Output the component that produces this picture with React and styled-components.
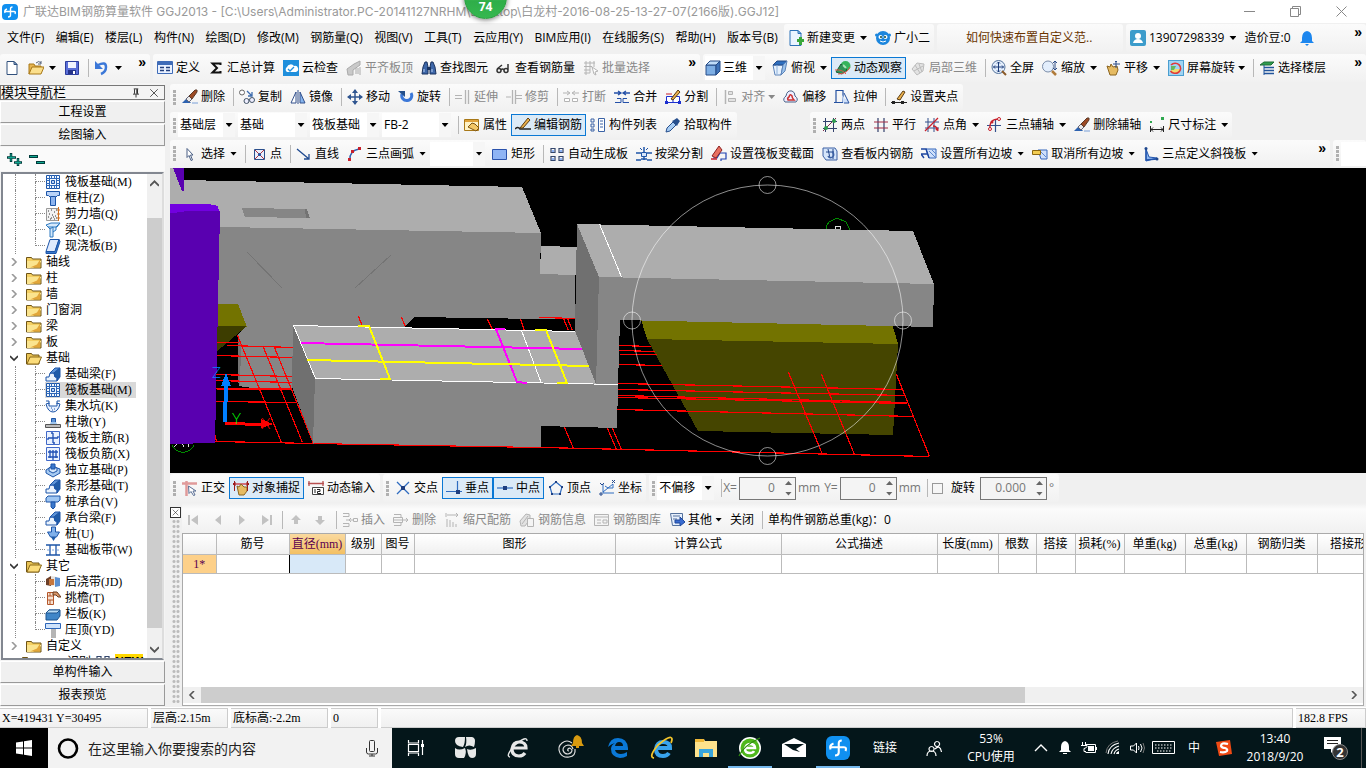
import React from "react";
import styled, { createGlobalStyle, css } from "styled-components";

const Global = createGlobalStyle`
  *, *::before, *::after { box-sizing: border-box; }
  html, body, #root { height: 100%; margin: 0; }
  body { background: #f0f0f0; overflow: hidden; }
  body, button, input, select { font: 12px/16px "Open Sans", "Noto Sans CJK SC", sans-serif; color: #000; }
  button { background: none; border: 0; padding: 0; margin: 0; white-space: nowrap; }
  svg { display: block; flex: none; }
`;

const simsun = css`font-family: "Liberation Serif", "Noto Sans CJK SC", serif;`;

/* ---------- icons ---------- */
const S = (d, c = "#2b4f8c", w = 1) => <path d={d} fill="none" stroke={c} strokeWidth={w} />;
const F = (d, c, s) => <path d={d} fill={c} stroke={s || "none"} />;
const B = "#1c55a8", G = "#b4b4b4", R = "#c8202c", K = "#222";

const raft = <>{F("M1.500 1.500h13v13h-13z", "#f2f8ff", B)}{S("M4.500 1v14M11.500 1v14M1 4.500h14M1 11.500h14M6.500 1v4M9.500 1v4M6.500 11v4M9.500 11v4M1 6.500h4M1 9.500h4M11 6.500h4M11 9.500h4", "#2f68b8")}{F("M6.500 6.500h3v3h-3z", "#b9d3f8", B)}</>;
const brush = <>{F("M0 14l5-5 4 5z", "#2d62b0")}{F("M4 10l3-3 3 3-3 3z", "#e8e8e8", "#667")}{F("M7 7l6-6h2v2l-5 7z", "#9c4a24", "#5b3a2a")}{S("M10 14h6", "#7aa0d8")}</>;
const beam3d = <>{F("M1 15v-4h3l1-4h4l1 4h2v4z", "#eaf3fd", B)}{F("M5 7l5-5h5L9 7z", "#5c93d6", B)}{F("M9 7l6-5v9l-3 4v-4h-2z", "#1f5ca8", B)}</>;
const bars = (c) => <>{F("M1.500 1.500h13v13h-13z", "#eaf2ff", "#4169c8")}{c}</>;

const ICONS = {
  logo: <><rect width="16" height="16" rx="4" fill="#1090f0" />{S("M8.500 11V5q0-2 2-2M3 7.500h9q2 0 1 2.500M5 5q-3 1-2 4M8.500 9v2q0 2-2.500 2", "#fff", 1.400)}</>,
  new: <>{F("M3 1.500h7l3 3v10H3z", "#fff", "#31507c")}{F("M10 1.500v3h3z", "#9db9dc", "#31507c")}</>,
  open: <>{F("M1 14V4h5l1 2h6v3H5z", "#e6b450", "#a87818")}{F("M1 14l3-7h12l-3 7z", "#fbdf8c", "#a87818")}{S("M8 3q3-3 5 0M13 1v3h-3", "#55637a")}</>,
  save: <>{F("M1.500 1.500h13v13h-13z", "#5b6fd8", "#2c3d9c")}{F("M4 2h8v6H4z", "#f2f5ff")}{F("M4 10h8v4H4z", "#26348a")}{F("M9 11h2v3H9z", "#fff")}</>,
  undo: <>{S("M4 5q8-4 8 2 0 5-5 7", "#3c78d8", 2.500)}{F("M1 1v8h8z", "#3c78d8")}</>,
  define: <>{F("M.500 1.500h15v12H.500z", "#e9f1ff", "#3f6cb8")}{F("M1 2h14v3H1z", "#3f6cb8")}{S("M3 7.500h4M3 10.500h4M9 7.500h4M9 10.500h4", "#223f7c", 1.500)}</>,
  sigma: <>{S("M12.500 5V3.500H4.500L9 8l-4.500 4.500h8V11", "#111", 2)}</>,
  cloud: <><rect width="16" height="16" fill="#1f8fdc" />{F("M4 12a3 3 0 0 1 0-5 4 4 0 0 1 7-1 3 3 0 0 1 2 6z", "#fff")}{S("M5 9l2 2 4-4", "#1f8fdc", 1.300)}</>,
  alignTop: <>{F("M1 9l7-5 6-3v4l-7 5v5H2z", "#c9c9c9", "#aaa")}{S("M10 8v6M12 8v6M14 7v8", "#aaa")}</>,
  binoc: <>{F("M2 7l2-5h2l1 5v7H1z", "#3d66a8", "#1a335f")}{F("M9 7l1-5h2l2 5 1 7H9z", "#3d66a8", "#1a335f")}{F("M6 7h4v3H6z", "#1a335f")}{S("M3 9v3M11 9v3", "#bcd3f6")}</>,
  glasses: <>{S("M1 10.500a2 2 0 1 0 4 0a2 2 0 1 0-4 0M8 10.500a2 2 0 1 0 4 0a2 2 0 1 0-4 0M5 10q1.500-2 3 0M1 9l5-4M12 10V4", "#333", 1.500)}</>,
  batch: <>{S("M1 3h11M1 6.500h8M1 10h6M1 13h6M3 1v14M7 1v12M11 1v6", G)}{F("M9 7l6 4-3 1 1 3-2-1z", "#fff", G)}</>,
  cube: <>{F("M1 5h10v10H1z", "#7daee4", "#244a86")}{F("M1 5l4-4h10l-4 4z", "#bfdcf8", "#244a86")}{F("M11 5l4-4v10l-4 4z", "#3d72b8", "#244a86")}</>,
  cubeTop: <>{F("M1 5h10l-2 10H3z", "#e6f1fd", "#5c83b8")}{F("M1 5l4-4h10l-4 4z", "#2f6fbf", "#244a86")}{F("M11 5l4-4-2 10-4 4z", "#9cc3ec", "#5c83b8")}{S("M5 5v9", "#8db1dc")}</>,
  orbit: <><circle cx="10.500" cy="6" r="5" fill="#35b35b" />{F("M1 12l5-8 6 6-5 4z", "#2f9357", "#1d5e38")}{S("M0 10q7-1 11 4M3 14q9 0 12-7", "#d8584a")}{S("M8 5l3 3", "#a8e6b8", 2)}</>,
  part3d: <><path d="M2 9l5-6 7 1-1 7-6 4z" fill="#e3e3e3" stroke="#bbb" />{S("M5 5l5 8M9 4l3 8M4 11l9-5", "#bbb")}</>,
  fit: <><circle cx="7.500" cy="7" r="6.500" fill="#e3eefc" stroke="#56749c" />{S("M11 11l4 4", "#8a5a28", 2)}{S("M7.500 2v10M2.500 7h10M6 3.500l1.500-1.500L9 3.500M6 10.500l1.500 1.500L9 10.500M4 5.500L2.500 7 4 8.500M11 5.500L12.500 7 11 8.500", "#1a3a78")}</>,
  zoom: <><circle cx="6" cy="6.500" r="5.500" fill="#e3eefc" stroke="#7c8da8" />{S("M10 11l4 4", "#b07a3a", 2.500)}{S("M13 1v9M11 3l2-2 2 2M11 8l2 2 2-2", "#2c4d88")}</>,
  pan: <>{F("M2 6l3 1 1-3 2 3 4-1 1 4-2 5H5z", "#e6bb62", "#8a6420")}{S("M11 1v7M8 4h7M10 2l1-1 1 1", "#2c4d88")}</>,
  rotScreen: <><rect x="0.500" y="0.500" width="15" height="15" fill="#9fd4f4" stroke="#4a9ed0" />{F("M3 9h9v4H3z", "#f0dc70")}{S("M3 5a5.500 5 0 1 1-.5 6", "#e03a3a", 1.600)}{F("M3 6h5l-2 4H3z", "#65b75c")}</>,
  layers: <>{F("M1 5l4-3h10l-3 3z", "#2f9c4f", "#1e6e36")}{S("M5 7.500h10M5 10.500h10M5 13.500h10", "#22559c", 1.600)}{S("M5 5v10", "#22559c")}</>,
  brush,
  copy: <><circle cx="3" cy="3.500" r="2.500" fill="#fff" stroke="#666" /><circle cx="7.500" cy="12" r="2.500" fill="#eef" stroke="#456" /><circle cx="13" cy="11" r="2.500" fill="#eef" stroke="#456" />{S("M8 2l5 5M13 3v4H9", "#3d6cae", 1.300)}</>,
  mirror: <>{F("M1 14l5-11v11z", "#fff", "#33508c")}{F("M10 3l5 11h-5z", "#86b5ee", "#33508c")}{S("M8 1v14", "#33508c")}</>,
  move: <>{S("M8 1v14M1 8h14", "#2f5590", 1.500)}{F("M8 0l3 4H5zM8 16l3-4H5zM0 8l4-3v6zM16 8l-4-3v6z", "#2f5590")}</>,
  rotate: <>{S("M4 5a5 5 0 1 0 9-1", "#3c78d8", 3)}{F("M0 2h7v6z", "#24508c")}</>,
  extend: <>{S("M0 6.500h7M0 9.500h7", G)}{S("M10.500 1v14M13.500 1v14", G, 1.300)}</>,
  trim: <>{S("M0 8h5M10 6.500h6M10 9.500h6", G)}{S("M6.500 1v14M9.500 1v14", G, 1.300)}</>,
  break: <>{S("M0 4h6M4 2l3 2-3 2M10 4h6M12 2L9 4l3 2", G)}{F("M1.500 9.500h5v3h-5zM9.500 9.500h5v3h-5z", "#fff", G)}</>,
  merge: <>{S("M0 4h6M4 2l3 2-3 2M10 4h6M12 2L9 4l3 2", "#2450a8", 1.300)}{S("M3 9.500h4v4H1M13 9.500H9v4h6", "#2450a8")}</>,
  split: <>{F("M1.500 7.500h13v6h-13z", "#fff", "#1c2fd0")}{S("M8 7v7", "#1c2fd0")}{S("M1 5h6", R)}{F("M6 10l7-9 2 2-7 8z", "#eab04c", "#5a3c12")}<rect x="0" y="12" width="3" height="3" fill="#1c2fd0" /><rect x="13" y="12" width="3" height="3" fill="#1c2fd0" /></>,
  align: <>{S("M3.500 1v14", G, 1.500)}{F("M6.500 2.500h4v3h-4zM6.500 9.500h7v3h-7z", "#e2e2e2", G)}</>,
  offset: <>{F("M2 13q-3-3 1-6 1-6 6-5 3 1 3 5 4 3 1 6z", "#eef", "#4a6388")}{S("M5 11q-1-2 1-3 1-4 3-1 0 2 2 4z", "#cc3030", 1.500)}</>,
  stretch: <>{S("M2 1.500h7v12H2zM0 13.500h3", "#2450a0", 1.200)}{F("M8 6l3 4h3v4H9z", "#cfe0fa")}{S("M10 4l5 10h-5", "#2450a0")}</>,
  grip: <>{S("M0 13.500h16", K)}<rect x="1" y="12" width="3" height="3" fill="#222" /><rect x="10" y="12" width="3" height="3" fill="#222" />{F("M6 10l6-8 2 1-5 8z", "#eab04c", "#5a3c12")}</>,
  props: <>{F("M.500 2.500h14v11H.500z", "#fff3c6", "#a87818")}{F("M1 3h13v2H1z", "#e0a23a")}{F("M4 10l4-4 3 1 4 4-3 3z", "#f3c766", "#7c5312")}</>,
  editBar: <>{S("M0 12q3-3 5 0h11", "#222", 1.600)}{F("M5 11l8-10 2 2-7 8z", "#eab04c", "#5a3c12")}</>,
  list: <>{S("M1 2h3v3H1zM1 7h3v3H1zM1 12h3v2H1z", "#3b63a6")}{F("M8.500 1.500h6v13h-6z", "#fff", "#3b63a6")}{S("M10 4h3M10 7h3M10 10h3", "#3b63a6")}</>,
  picker: <>{F("M1 15l1-4 6-6 3 3-6 6z", "#a8cdf4", "#274f8d")}{F("M7 4l2-1 3-2 3 3-2 3-1 2z", "#274f8d")}</>,
  twoPt: <>{S("M3.500 1v14M11.500 1v14M1 4.500h14M1 11.500h14", "#33406c")}{S("M1 14L14 1", "#7b2b4a")}<circle cx="4" cy="11" r="2" fill="#2f9c4f" /><circle cx="12" cy="4" r="2" fill="#2f9c4f" /></>,
  parallel: <>{S("M5 1v14M11 1v14", "#33406c", 1.200)}{S("M1 5h14M1 11h14", "#a32b44", 1.200)}</>,
  angle: <>{S("M4 1v14M10 1v14M1 5h14M1 11h14", "#33508c")}{S("M1 14L14 1M9 9q4 0 5 5", R, 1.300)}<circle cx="13" cy="12" r="1.500" fill={R} /></>,
  threePt: <>{S("M8.500 2v13M0 8.500h14", "#33508c", 1.200)}{S("M3 12Q2 2 12 2", R, 1.300)}<circle cx="12" cy="2" r="1.500" fill="#fff" stroke={R} /><circle cx="3" cy="12" r="1.500" fill="#fff" stroke={R} /><circle cx="5" cy="5" r="1.500" fill={R} /></>,
  dimension: <>{S("M1.500 9v6M14.500 9v6M2 12.500h12M4 10.500l-2 2 2 2M12 10.500l2 2-2 2", K)}<rect x="1" y="4" width="2" height="2" fill="#2fa84f" /><rect x="12" y="0" width="3" height="3" fill="#2fa84f" /></>,
  pointer: <>{F("M5 2.500l6 6.500H8.500l2 5-1.500.5-2-5-2 2z", "#fff", "#4a5f84")}</>,
  point: <>{F("M3.500 3.500h10v10h-10z", "#e8effc", "#2b4f8c")}{S("M4 4l9 9M13 4l-9 9", "#b03040")}<circle cx="8.500" cy="8.500" r="1.500" fill={B} /></>,
  line: <>{S("M1 3l12 10M13 8v5H8", "#1f4a90", 1.300)}</>,
  arc: <>{S("M3 14Q2 5 12 3", "#2f5fb0", 1.400)}<rect x="1" y="12" width="3" height="3" fill={R} /><rect x="4" y="4" width="3" height="3" fill={R} /><rect x="11" y="1" width="3" height="3" fill={R} /></>,
  rect: <>{F("M.500 3.500h14v10H.500z", "#8fb4f4", "#2a52ac")}</>,
  autoGrid: <>{S("M2 2.500h4v4H2zM10 2.500h4v4h-4zM2 10.500h4v4H2zM10 10.500h4v4h-4z", "#33466c", 1.200)}{F("M3 4h2v2H3zM11 4h2v2h-2zM3 12h2v2H3zM11 12h2v2h-2z", "#8fb4f4")}</>,
  beamSplit: <>{S("M0 7h5M16 7h-5M0 14h5M16 14h-5M5 13h6M8 1v13", "#1f55a8", 1.500)}{F("M5.500 6.500h5v4h-5z", "#d6e6fb", "#1f55a8")}{S("M4 2l2 2M12 2l-2 2", "#1f55a8")}</>,
  section: <>{S("M2 12h4l3-5h6v6h-5v2", "#1f40b0", 1.200)}{F("M1 10L8 0l3 4-6 8z", "#e87060", "#8c2020")}{S("M0 13h6", R, 1.500)}</>,
  viewBar: <>{F("M1 2h12l2 3v9H4L1 10z", "#d5e5fa", "#3c61a4")}{S("M4 6h8M6 3l2 9M11 3v10", "#24488c")}{S("M6 10a3 3 0 1 0 4-4", "#3c61a4", 1.500)}</>,
  slope: <>{F("M5 3h10v9H8z", "#cfe0fa", "#3566bc")}{S("M0 3h5l3 9M0 8l6 0M0 8l3 4", "#1c45a0", 1.400)}{S("M8 5l6 6M11 4l4 4", "#5b87d0")}</>,
  slopeCancel: <>{F("M6 4h9v9H9z", "#cfe0fa", "#3566bc")}{F("M.500 4.500h8v4h-8z", "#f3cd52", "#8c6710")}{S("M9 6l5 5", "#5b87d0")}</>,
  slant: <>{F("M3 3l3 8 8 1-11 3z", "#8cb6f0", "#2355ac")}{S("M3 2v12l11-1", "#2355ac", 1.400)}<circle cx="3" cy="2.500" r="1.500" fill="#1f478e" /><circle cx="14" cy="13" r="1.500" fill="#1f478e" /></>,
  ortho: <>{S("M0 3.500h15M4.500 1v15", "#e09a9a", 2.500)}{F("M6.500 6l7.500 5h-3l2 4-1.500.5-2.500-4-2 2z", "#fff", "#5b6f94")}</>,
  snap: <>{S("M1 4h14", R, 1.200)}{F("M4 6l2 1 2-3 3 3 3 0v4l-3 4H6z", "#e6bb62", "#8a6420")}{S("M1.500 1v10M14.500 1v10M0 4l2-2v4zM16 4l-2-2v4z", "#9c1c1c")}</>,
  dyn: <>{S("M0 3.500h16M1 1v5M15 1v5", "#b85050", 1.300)}{F("M4.500 7.500h11v7h-11z", "#fff", "#444")}{S("M7 9v4M9 9.500h3v2H9.500v2H13", "#222")}</>,
  cross: <>{S("M2 2l12 12M14 2L2 14", "#2f6cc0", 1.300)}<rect x="6" y="6" width="4" height="4" fill="#1f3f80" /></>,
  perp: <>{S("M0 11.500h16M11.500 1v13", "#2f6cc0", 1.200)}<rect x="10" y="10" width="4" height="4" fill="#1f3f80" /></>,
  mid: <>{S("M0 8h16", "#2f6cc0", 1.200)}<rect x="6" y="6" width="4" height="4" fill="#1f3f80" /></>,
  penta: <>{S("M8 2l6 5-2 7H4L2 7z", "#2f6cc0", 1.200)}{F("M7 1h2v2H7zM1 6h2v2H1zM13 6h2v2h-2zM3 13h2v2H3zM11 13h2v2h-2z", "#1f3f80")}</>,
  coord: <>{S("M4 4v9h11M4 12L14 4M6 6l3 2h5V4", "#2f6cc0")}{S("M1 3l2 2 2-2M13 0l3 3M16 0l-3 3M1 13h2v2H1z", "#24488c")}</>,
  first: <>{F("M2 3h2v10H2zM12 3v10L5 8z", "#c2c2c2")}</>,
  prev: <>{F("M11 3v10L5 8z", "#c2c2c2")}</>,
  next: <>{F("M5 3v10l6-5z", "#c2c2c2")}</>,
  last: <>{F("M12 3h2v10h-2zM4 3v10l7-5z", "#c2c2c2")}</>,
  up: <>{F("M8 3l5 5h-3v4H6V8H3z", "#c2c2c2")}</>,
  down: <>{F("M8 13L3 8h3V4h4v4h3z", "#c2c2c2")}</>,
  insert: <>{S("M1 1.500h6v3H1M1 11.500h6v3H1M4 8h7M9 6L7 8l2 2M11.500 6.500h4v3h-4z", G)}</>,
  delRow: <>{S("M1 2.500h7v3M1 13.500h7v-3M1 8h14M13 6l2 2-2 2M.500 5.500h9v5h-9z", G)}</>,
  scale: <>{S("M2 1v4M3 3h11M12 1l2 2-2 2M3 7v8M6 8v7M9 10v5M12 12v3", G)}</>,
  info: <>{F("M1 9l6-7 4 1v4l-5 7H2z", "#e2e2e2", G)}{F("M8.500 6.500h6v8h-6z", "#f4f4f4", G)}{S("M3 12l6-8", G)}</>,
  lib: <>{F("M.500 2.500h14v11H.500z", "#f4f4f4", G)}{S("M1 5h13M3 8h4M3 11h4M9 8h4v3H9z", G)}</>,
  other: <>{F("M1.500 1.500h12v9l-3 3h-7z", "#e6effc", "#54719c")}{S("M4 4h7M4 7h4", "#54719c")}{F("M6 8h5V5l5 5-5 4v-3H6z", "#3a6cd0", "#1f479a")}</>,
  newChange: <>{F("M2 .500h8l3 3v12H2z", "#eaf4ff", "#2c72b8")}{F("M10 .500v3h3z", "#9cc6ef", "#2c72b8")}{F("M9 9h2V7h3v2h2v3h-2v3h-3v-3H9z", "#3aa83a")}</>,
  mascot: <><circle cx="8" cy="8" r="7" fill="#1c86dd" /><circle cx="1.500" cy="5" r="1.500" fill="#1c86dd" /><circle cx="14.500" cy="5" r="1.500" fill="#1c86dd" /><circle cx="5.500" cy="7" r="2" fill="#fff" /><circle cx="10.500" cy="7" r="2" fill="#fff" /><circle cx="6" cy="7" r="1" fill="#143" /><circle cx="10" cy="7" r="1" fill="#143" />{S("M5 11q3 2 6 0", "#fff")}</>,
  user: <><rect width="16" height="16" rx="2" fill="#3c9ccb" /><circle cx="8" cy="6" r="3" fill="#fff" />{F("M3 13q1-4 5-4t5 4z", "#fff")}</>,
  bell: <>{F("M8 1q5 1 5 7v3l2 2H1l2-2V8q0-6 5-7z", "#1c86ee")}{F("M6 14h4l-2 2z", "#1c86ee")}</>,
  raft,
  column: <>{F("M1.500 1.500h13v4h-2l-2 2h-5l-2-2h-2z", "#b9d3f8", B)}{F("M5.500 6.500h5v9h-5z", "#8db4ee", B)}</>,
  wall: <>{F("M1.500 2.500h12v12h-12z", "#f2f2f2", "#999")}{S("M3 5h1M6 4h1M9 6h1M4 8h1M7 9h1M10 10h1M3 11h1M6 12h1M9 13h1M11 4h1M8 11h1M11 12h1M5 13h1", "#333")}{S("M13.500 1v14M12 4h3M12 8h3M12 12h3", "#d07020")}</>,
  beam: <>{F("M1 3l5-2h9l-4 4v3l-3 2v5H5V7z", "#d6e9fb", "#2c79c0")}{S("M3 5h9l3-4M8 5v5M5 7l3-2", "#2c79c0")}</>,
  slab: <>{F("M5 1.500h9L10 13.500H1z", "#dfeafd", B)}{F("M1 13.500h9l4-12 1 2-4 12H1z", "#3b78cc", B)}</>,
  folder: <>{F("M.500 3.500h5l1 1.500h8.500v9H.500z", "#f4cf62", "#6e5416")}{F("M1 7h14v1l-8 6H1z", "#fbe48e")}{F("M14 5.500v8H4l7-3z", "#e2a63a")}</>,
  folderOpen: <>{F("M.500 3.500h5l1 1.500h6.500v9H.500z", "#e9c354", "#6e5416")}{F("M1 14l3-7h11.500l-3 7z", "#fbdc7a", "#8c6a18")}</>,
  fbeam: beam3d, strip: beam3d, capbeam: beam3d,
  pit: <>{F("M1 6q2 8 7 8t7-8l-3-1v3H4V5z", "#e7f0ff", B)}{S("M6 10h1M9 11h1M7 12h1M1 3h3v3M15 3h-3v3", B)}</>,
  pier: <>{F("M6.500 4.500h4v5h-4z", "#5c93d6", B)}{F("M5 10l1-2h5l1 2z", "#9cc3ec")}{F("M.500 10.500h15v3H.500z", "#bdbdbd", "#555")}</>,
  mainBar: bars(S("M8 3v10M3 8h10M6 3h2M8 13h2M3 8v2M13 6v2", "#1e4fb4", 1.300)),
  negBar: bars(S("M5 4v8M11 4v8M3 6h10M3 11h10M8 4v10", "#1e4fb4", 1.300)),
  indep: <>{F("M1 8l6-4 8 3v4l-7 4-7-4z", "#a7cbf2", B)}{F("M4 6l4-2 4 2v3l-4 2-4-2z", "#d5e7fb", B)}{F("M6 2h4v5H6z", "#3b78cc", B)}</>,
  pilecap: <>{F("M1 4l2-2h12v4l-2 2H1z", "#9fc6f2", B)}{F("M6 8h4v5l-2 2-2-2z", "#3b78cc", B)}</>,
  pile: <>{F("M6.500 1h4v5h4l-3 5h-6l-3-5h4z", "#7fb0ea", B)}{F("M6 11h5l-2.500 4z", "#1f5ca8")}</>,
  band: <>{S("M1 3h14M1 13h14", B, 1.600)}{S("M5 3v10M11 3v10", B, 1.300)}{S("M2 8h2M7 8h2M12 8h2", "#7aa6e0")}</>,
  post: <>{F("M1 5l5-3v10l-5-1z", "#6c3f28")}{F("M6 2l6 1v8l-6 1z", "#e8e2dc")}{F("M10 3l5 1v8l-5 1z", "#5b8fd0")}{F("M4 5h5v6H4z", "#c7763c")}</>,
  eaves: <>{F("M2.500 2.500h6v12h-6z", "#f7e3d3", "#b4572a")}{S("M2 6h6M2 10h6M5 3v3M5 10v4", "#b4572a")}{F("M8 2h4l4 5h-3l-2-2H8z", "#d9966a", "#6a3a1c")}</>,
  rail: <>{F("M1 7l3-3h11v6l-3 4H1z", "#3f86c8", "#1d5590")}{F("M1 7l3-3h11l-3 3z", "#b8dcf5", "#1d5590")}</>,
  coping: <>{F("M.500 1.500h15v5H.500z", "#cfe3fb", "#2c65b8")}{F("M6 7h5v9H6z", "#b5b5b5")}</>,
  addNode: <>{S("M5 2v9M1 6.500h9M12 7v8M8 11.500h8", "#003c3c", 2.500)}{S("M5 3v7M2 6.500h7M12 8v6M9 11.500h6", "#10a890")}</>,
  delNode: <>{S("M0 5.500h9M7 11.500h9", "#003c3c", 3)}{S("M1 5.500h7M8 11.500h7", "#10a890")}</>,
  pin: <>{S("M5 2.500h6M6 3v6M10 3v6M4 9.500h8M8 10v4M9 3v6", "#000")}</>,
  close: <>{S("M3 3l10 10M13 3L3 13", "#222")}</>,
};

const Icon = ({ name, size = 16 }) => (
  <svg width={size} height={size} viewBox="0 0 16 16" aria-hidden="true">{ICONS[name]}</svg>
);

/* ---------- shell ---------- */
const Shell = styled.div`display: flex; flex-direction: column; height: 100vh; min-height: 560px; background: #f0f0f0;`;
const TitleBar = styled.header`
  position: relative; flex: none; height: 23px; display: flex; align-items: center;
  padding: 0 2px; background: #fff; color: #999;
`;
const TitleText = styled.h1`
  margin: 0; padding-left: 5px; font: 12px/16px Inter, "Noto Sans CJK SC", sans-serif; flex: 1; white-space: nowrap;
`;
const WindowButton = styled.button`width: 46px; height: 22px; display: grid; place-items: center;`;
const SpeedBall = styled.div`
  position: absolute; left: 464px; top: -24px; width: 43px; height: 43px; border-radius: 50%; z-index: 2;
  background: linear-gradient(#8be08b, #2fae49 60%, #35b850); border: 1px solid #2c9c40; box-shadow: 0 1px 5px #0008;
  color: #fff; font-weight: 700; display: flex; align-items: flex-end; justify-content: center; padding-bottom: 3px;
`;

const Row = styled.div`flex: none; height: ${(p) => p.$h || 28}px; display: flex; gap: 3px; padding: 1px 0; min-width: 0; overflow: hidden;`;
const Band = styled.div`
  display: flex; align-items: center; min-width: 0; white-space: nowrap; border-radius: 3px; flex: none;
  background: linear-gradient(#fbfbfb, #f1f1f1); padding-left: ${(p) => p.$pl || 0}px; padding-right: ${(p) => p.$pr || 0}px;
  ${(p) => p.$w && css`width: ${p.$w}px;`}
  ${(p) => p.$grow && css`flex: 1 1 0; overflow: hidden;`}
  ${(p) => p.$ml && css`margin-left: ${p.$ml}px;`}
`;
const Menu = styled.nav`
  display: flex; align-items: center; justify-content: space-between; width: 781px; padding: 0 3px 0 7px; white-space: nowrap; flex: none;
`;
const Tool = styled.button`
  height: 22px; display: flex; align-items: center; gap: 3px; padding: 0 4px; flex: none;
  color: ${(p) => (p.disabled ? "#888" : p.$brown ? "#6a3500" : "#000")};
  ${(p) => p.$on && css`background: #dbeaf7; outline: 1px solid #0a78d4; outline-offset: -1px;`}
`;
const Caret = styled.i`
  width: 7px; height: 4px; margin-left: ${(p) => (p.$tight ? 0 : 2)}px; flex: none; background: ${(p) => p.$c || "#000"};
  clip-path: polygon(0 0, 100% 0, 50% 100%);
`;
const Sep = styled.span`width: 5px; height: 18px; flex: none; border-right: 1px solid #b8b8b8; margin-right: 1px;`;
const Grip = styled.span`
  width: 3px; height: 15px; margin: 0 2px 0 3px; flex: none;
  background: repeating-linear-gradient(#b0b0b0 0 3px, transparent 3px 4px);
`;
const MoreButton = styled.button`
  margin-left: auto; align-self: flex-start; padding: 0 4px; font: 700 14px/16px "Liberation Sans", sans-serif; flex: none;
`;
const ComboBox = styled.label`
  width: ${(p) => p.$w || 69}px; height: 24px; margin-right: 3px; background: #fff; display: flex; align-items: center; flex: none;
`;
const ComboSelect = styled.select`
  appearance: none; border: 0; background: transparent; padding: 0 2px; flex: 1; min-width: 0; height: 24px; outline: 0;
`;
const ComboDrop = styled.span`
  width: 12px; height: 24px; display: grid; place-items: center; background: #f6f6f6; flex: none;
`;
const Blank = styled.span`flex: 1; height: 24px; background: #fff;`;

const Combo = ({ label, value, w, icon }) => (
  <ComboBox $w={w}>
    {icon && <Icon name={icon} />}
    <ComboSelect aria-label={label} defaultValue={value}><option>{value}</option></ComboSelect>
    <ComboDrop><Caret $tight /></ComboDrop>
  </ComboBox>
);
const T = ({ i, t, drop, tight, off, on, brown }) => (
  <Tool type="button" disabled={off} $on={on} $brown={brown}>
    {i && <Icon name={i} />}{t}{drop && <Caret $tight={tight} $c={off ? "#888" : "#000"} />}
  </Tool>
);
const More = () => <MoreButton type="button" aria-label="更多">»</MoreButton>;

/* ---------- left panel ---------- */
const Body = styled.div`flex: 1; min-height: 0; display: flex; gap: 5px;`;
const Side = styled.aside`
  width: 165px; flex: none; display: flex; flex-direction: column; gap: 1px; padding: 2px 0 1px; background: #f4f4f4; ${simsun}
`;
const SideTitle = styled.h2`
  margin: 0; height: 15px; border: 1px solid #777; display: flex; align-items: center; font: inherit; font-size: 13px; line-height: 13px;
`;
const SideName = styled.span`flex: 1; white-space: nowrap;`;
const MiniButton = styled.button`width: 16px; height: 13px; margin-right: 2px; display: grid; place-items: center;`;
const SideButton = styled.button`
  height: 22px; flex: none; ${simsun} background: #f0f0f0; border: 1px solid; border-color: #fff #999 #999 #fff;
`;
const SideTools = styled.div`height: 24px; flex: none; background: #fafafa; display: flex; align-items: center; gap: 7px; padding: 0 6px;`;
const TreeBox = styled.div`
  flex: 1; min-height: 0; margin: 0 1px; background: #fff; border: 2px solid; border-color: #828790 #ddd #828790 #828790;
  display: flex; overflow: hidden;
`;
const TreeList = styled.ul`list-style: none; margin: 0; padding: 0; flex: 1; min-width: 0; overflow: hidden;`;
const TreeRow = styled.li`height: 16px; display: flex; align-items: center; white-space: nowrap;`;
const TreeLabel = styled.button`
  ${simsun} height: 16px; display: flex; align-items: center; gap: 4px; padding: 0 4px 0 0;
  background: ${(p) => (p.$on ? "#d9d9d9" : "none")};
`;
const Trunk = styled.span`width: 20px; height: 16px; margin-left: 12px; border-left: 1px dotted #888;`;
const Branch = styled.span`
  width: 10px; height: 16px;
  &::before, &::after { content: ""; display: block; height: 8px; border-left: 1px dotted #888; }
  &::before { border-bottom: 1px dotted #888; }
  &::after { border-left-color: ${(p) => (p.$last ? "transparent" : "#888")}; }
`;
const Expander = styled.span`width: 23px; height: 16px; padding: 4px 0 0 7px;`;
const NewTag = styled.b`background: #ffd800; font: 700 12px/16px "Liberation Sans", sans-serif;`;
const VScroll = styled.div`width: 15px; padding: 5px 0 4px; background: #f0f0f0; display: flex; flex-direction: column; align-items: center; flex: none;`;
const VThumb = styled.span`flex: 1; width: 15px; background: #cdcdcd; margin: 30px 0 17px;`;

const TREE = [
  ["raft", "筏板基础(M)"], ["column", "框柱(Z)"], ["wall", "剪力墙(Q)"], ["beam", "梁(L)"], ["slab", "现浇板(B)", "last"],
  ["+", "轴线"], ["+", "柱"], ["+", "墙"], ["+", "门窗洞"], ["+", "梁"], ["+", "板"], ["-", "基础"],
  ["fbeam", "基础梁(F)"], ["raft", "筏板基础(M)", "on"], ["pit", "集水坑(K)"], ["pier", "柱墩(Y)"], ["mainBar", "筏板主筋(R)"],
  ["negBar", "筏板负筋(X)"], ["indep", "独立基础(P)"], ["strip", "条形基础(T)"], ["pilecap", "桩承台(V)"], ["capbeam", "承台梁(F)"],
  ["pile", "桩(U)"], ["band", "基础板带(W)", "last"], ["-", "其它"], ["post", "后浇带(JD)"], ["eaves", "挑檐(T)"], ["rail", "栏板(K)"],
  ["coping", "压顶(YD)", "last"], ["+", "自定义"], ["+", "CAD识别", "new"],
];

const Chevron = ({ d, c = "#555", w = 8 }) => (
  <svg width={w} height={w} viewBox="0 0 8 8" aria-hidden="true"><path d={d} fill="none" stroke={c} strokeWidth="1.600" /></svg>
);
const TreeItem = ({ item: [icon, label, flag] }) => {
  const group = icon === "+" || icon === "-";
  return (
    <TreeRow>
      {group
        ? <Expander><Chevron d={icon === "+" ? "M2 0l4 4-4 4" : "M0 2l4 4 4-4"} c={icon === "+" ? "#999" : "#333"} /></Expander>
        : <><Trunk /><Branch $last={flag === "last"} /></>}
      <TreeLabel type="button" $on={flag === "on"}>
        <Icon name={icon === "+" ? "folder" : icon === "-" ? "folderOpen" : icon} />{label}
        {flag === "new" && <><Icon name="autoGrid" /><NewTag>NEW</NewTag></>}
      </TreeLabel>
    </TreeRow>
  );
};

/* ---------- model view ---------- */
const Main = styled.main`flex: 1; min-width: 0; display: flex; flex-direction: column;`;
const View = styled.section`flex: 1; min-height: 0; background: #000; overflow: hidden;`;
const Drawing = styled.svg`width: 100%; height: 100%;`;
const P = ({ p, c }) => <polygon points={p} fill={c} />;
const TOP = "#adadad", FACE = "#868686", SIDE = "#707070";

const Scene = () => (
  <Drawing viewBox="0 0 1196 305" preserveAspectRatio="xMinYMin slice" shapeRendering="crispEdges" role="img" aria-label="三维模型">
    <path d="M2 277a12 12 0 0 0 22 0" fill="none" stroke="#008c00" />
    <path d="M4 279l3-3M11 274l3 5M18 274v5" stroke="#ddd" />
    <P c={TOP} p="0,0 3,0 12,12 352,19 371,65 0,58" />
    <P c={FACE} p="0,58 371,65 370,106 405,107 405,150 369,151 245,149 235,158 220,175 123,179 122,221 88,221 69,218 68,166 77,158 0,136" />
    <P c="#737373" p="68,166 71,178 70,218 68,214" />
    <P c={TOP} p="371,78 408,79 406,107 370,106" />
    <P c={FACE} p="72,40 136,41 139,50 75,49" />
    <P c="#737373" p="135,41 137,41 140,50 136,50" />
    <path d="M77 84l35 36M221 87l-36 33" stroke="#747474" fill="none" />
    <P c="#737300" p="47,136 68,136 77,159 47,159" />
    <P c="#3d3d00" p="47,158 77,158 46,184" />
    <P c="#737300" p="470,148 721,152 728,176 477,171" />
    <P c="#454500" p="477,171 728,176 723,267 528,263" />
    <g stroke="#f00" strokeWidth="1.200" fill="none" transform="translate(.5 .5)">
      <path d="M45 174L68 174M57 177L123 179M45 187L122 189M45 206L122 208M45 212L122 214M45 233L127 234M45 273L143 275L371 279L759 288" />
      <path d="M45 220L122 221" strokeWidth="2" />
      <path d="M67 167L111 274M93 179L132 274M104 179L143 275M44 265L46 273" />
      <path d="M188 148L192 158M231 149L235 158M317 151L322 161M350 151L354 162M393 150L398 162M397 150L402 162M369 149L406 150" />
      <path d="M394 259L403 280M437 260L446 281M442 260L451 281" />
      <path d="M449 177L481 178M449 182L485 183M449 186L486 186M448 196L492 197" />
      <path d="M448 215L733 221M448 221L735 227M448 227L737 234M448 229L737 235M447 241L744 248" />
      <path d="M726 206L759 288M618 204L652 286M651 206L684 286" />
    </g>
    <P c={TOP} p="123,157 405,163 427,216 145,210" />
    <P c={SIDE} p="123,157 145,210 144,277 122,219" />
    <P c={FACE} p="145,210 448,216 447,260 371,258 371,279 143,275" />
    <g stroke="#fff" fill="none" transform="translate(.5 .5)"><path d="M405 163L123 157L145 210L448 216M351 162L371 215" /></g>
    <g stroke="#f0f" fill="none" strokeWidth="2"><path d="M131 175L412 181M335 161L326 161L347 214L357 215" /></g>
    <g stroke="#ff0" fill="none" strokeWidth="2"><path d="M137 192L420 198M188 158L199 158L220 211L210 211M365 162L376 162L397 215L387 215" /></g>
    <P c={SIDE} p="407,56 429,108 426,216 405,163" />
    <P c={FACE} p="429,108 764,115 763,159 450,152 448,216 426,216" />
    <path d="M656 62v-3l3-5 8-4 9 4 4 8" fill="none" stroke="#008c00" />
    <path d="M665.500 63v-5h5v5" fill="none" stroke="#ddd" />
    <P c={TOP} p="407,56 743,63 764,116 429,109" />
    <path d="M429.500 56L451.500 109M426 216.500L448 216.500" stroke="#fff" />
    <P c="#5900b0" p="3,0 14,0 14,23 12,23" />
    <P c="#7200e0" p="0,36 38,36 48,38 50,50 0,50" />
    <P c="#5900b0" p="0,45 13,44 14,43 50,43 45,275 0,276" />
    <path d="M55 254L56 215" stroke="#0080ff" strokeWidth="4" />
    <path d="M56 205l5 13h-10z" fill="#0080ff" />
    <path d="M55 255L94 257" stroke="#f00" strokeWidth="3" />
    <path d="M103 256l-12-5v9z" fill="#f00" />
    <g fontFamily="Lato, sans-serif" fontWeight="300" fontSize="15">
      <text x="42" y="210" fill="#0080ff">Z</text>
      <text x="62" y="256" fill="#0f0">Y</text>
      <text x="91" y="261" fill="#f00">X</text>
    </g>
    <g fill="none" stroke="#fff" strokeOpacity=".55" shapeRendering="auto">
      <circle cx="597.500" cy="152.500" r="135.500" />
      <circle cx="597.500" cy="17" r="8.500" /><circle cx="597.500" cy="288" r="8.500" />
      <circle cx="462" cy="152.500" r="8.500" /><circle cx="733" cy="152.500" r="8.500" />
    </g>
  </Drawing>
);

/* ---------- lower panels ---------- */
const Unit = styled.span`color: #777; padding: 0 2px; line-height: 20px;`;
const Field = styled.span`display: flex; align-items: center; color: #777; gap: 2px; padding-left: ${(p) => p.$pl || 0}px;`;
const SpinBox = styled.span`
  width: ${(p) => p.$w}px; height: 23px; border: 1px solid #777; background: #f4f4f4; display: flex; align-items: center; padding-right: 3px;
`;
const SpinInput = styled.input`flex: 1; min-width: 0; border: 0; background: none; text-align: right; color: #777; padding: 0 10px 0 0; outline: 0;`;
const SpinArrows = styled.span`
  display: flex; flex-direction: column; gap: 7px;
  i:first-child { transform: rotate(180deg); }
`;
const CheckLabel = styled.label`display: flex; align-items: center; gap: 8px; padding: 0 5px 0 3px;`;
const Check = styled.input`appearance: none; width: 11px; height: 11px; margin: 0; border: 1px solid #999; background: #f6f6f6;`;
const Spin = ({ label, value, w = 57 }) => (
  <SpinBox $w={w}>
    <SpinInput aria-label={label} defaultValue={value} />
    <SpinArrows><Caret $tight $c="#666" /><Caret $tight $c="#666" /></SpinArrows>
  </SpinBox>
);

const Details = styled.section`flex: none; height: 204px; display: flex; min-width: 0;`;
const DockGrip = styled.div`
  width: 12px; flex: none; padding-top: 4px;
  &::after {
    content: ""; display: block; height: calc(100% - 14px); margin: 1px 2px 0;
    background: radial-gradient(circle, #bbb 1px, transparent 2px) 0 0 / 4px 5px;
  }
`;
const DockClose = styled.button`width: 11px; height: 11px; border: 1px solid #333; display: grid; place-items: center; background: #fff;`;
const DetailsMain = styled.div`flex: 1; min-width: 0; display: flex; flex-direction: column;`;
const DetailsTools = styled.div`
  height: 30px; flex: none; display: flex; align-items: center; padding-top: 3px; white-space: nowrap; overflow: hidden;
  background: linear-gradient(#f0f0f0, #fbfbfb 20%, #f1f1f1);
`;
const Note = styled.span`padding: 0 4px;`;
const GridBox = styled.div`
  flex: 1; min-height: 0; margin: 0 2px 1px 0; background: #fff; border: 1px solid #aaa; overflow: hidden;
  display: flex; flex-direction: column; justify-content: space-between; ${simsun}
`;
const GridClip = styled.div`overflow: hidden;`;
const Table = styled.table`border-collapse: collapse; table-layout: fixed; width: 1208px; ${simsun}`;
const Th = styled.th`
  height: 20px; padding: 0; font-weight: 400; border: solid #bbb; border-width: 0 1px 1px 0; white-space: nowrap;
  background: ${(p) => (p.$on ? "linear-gradient(#f9d99f, #f3c062)" : "linear-gradient(#fff, #f0f0f0)")};
  color: ${(p) => (p.$on ? "#5a0050" : "#000")};
`;
const Td = styled.td`
  height: 19px; padding: 0; border: solid #bbb; border-width: 0 1px 1px 0; text-align: center;
  background: ${(p) => (p.$head ? "#fdd089" : p.$on ? "#d8e9f8" : "#fff")};
  color: #5a0050; ${(p) => p.$edge && css`border-right-color: #000;`}
`;
const HScroll = styled.div`
  height: 18px; border-bottom: 2px solid #fff; flex: none; background: #f0f0f0;
  display: flex; align-items: center; justify-content: space-between; padding: 0 5px;
`;
const HTrack = styled.span`flex: 1; margin: 0 5px; height: 16px;`;
const HThumb = styled.span`display: block; width: 72%; height: 16px; background: #cdcdcd;`;

const COLS = [[33, ""], [73, "筋号"], [56, "直径(mm)"], [36, "级别"], [33, "图号"], [201, "图形"], [166, "计算公式"], [156, "公式描述"],
  [61, "长度(mm)"], [38, "根数"], [39, "搭接"], [49, "损耗(%)"], [61, "单重(kg)"], [61, "总重(kg)"], [71, "钢筋归类"], [74, "搭接形式"]];

const StatusBar = styled.footer`
  flex: none; height: 21px; display: flex; gap: 3px; background: #fff; border-top: 1px solid #fff; ${simsun}
`;
const StatusCell = styled.span`
  width: ${(p) => p.$w}px; ${(p) => p.$grow && css`flex: 1;`} border: 1px solid #ccc; border-width: 1px 1px 1px 0;
  background: linear-gradient(#fafafa, #f0f0f0); padding: 1px 2px 0; white-space: nowrap;
`;

/* ---------- task bar ---------- */
const TaskBar = styled.footer`flex: none; height: 40px; display: flex; background: #04161a; color: #fff;`;
const StartButton = styled.button`width: 48px; background: #000; display: grid; place-items: center; flex: none;`;
const Search = styled.label`width: 344px; flex: none; background: #f2f2f2; display: flex; align-items: center; gap: 9px; padding: 0 12px 0 8px;`;
const SearchInput = styled.input`
  flex: 1; min-width: 0; border: 0; background: none; padding: 0; font-size: 14px; height: 24px; outline: 0;
  &::placeholder { color: #222; opacity: 1; }
`;
const TaskButton = styled.button`
  width: ${(p) => p.$w || 44}px; flex: none; display: grid; place-items: center; color: #fff;
  ${(p) => p.$run && css`box-shadow: inset 0 -2px #76b9ed;`}
`;
const Tray = styled.div`margin-left: auto; display: flex; align-items: stretch;`;
const TrayText = styled.div`
  width: ${(p) => p.$w}px; text-align: center; line-height: 18px; display: flex; flex-direction: column; justify-content: center;
`;
const Edge = styled.span`width: 5px; border-left: 1px solid #555; margin-left: 1px;`;

const Pic = ({ w = 24, h = w, children }) => <svg width={w} height={h} viewBox={`0 0 ${w} ${h}`} aria-hidden="true">{children}</svg>;

export default function App() {
  return (
    <Shell>
      <Global />
      <TitleBar>
        <Icon name="logo" />
        <TitleText>广联达BIM钢筋算量软件 GGJ2013 - [C:\Users\Administrator.PC-20141127NRHM\Desktop\白龙村-2016-08-25-13-27-07(2166版).GGJ12]</TitleText>
        <SpeedBall>74</SpeedBall>
        <WindowButton type="button" aria-label="最小化"><Pic w={11}>{S("M0 5.500h11", "#888")}</Pic></WindowButton>
        <WindowButton type="button" aria-label="还原"><Pic w={11}>{S("M.500 2.500h8v8h-8zM2.500 2V.500h8v8H9", "#888")}</Pic></WindowButton>
        <WindowButton type="button" aria-label="关闭"><Pic w={11}>{S("M.500.500l10 10M10.500.500l-10 10", "#888")}</Pic></WindowButton>
      </TitleBar>

      <Row $h={30}>
        <Menu>
          {["文件(F)", "编辑(E)", "楼层(L)", "构件(N)", "绘图(D)", "修改(M)", "钢筋量(Q)", "视图(V)", "工具(T)", "云应用(Y)", "BIM应用(I)", "在线服务(S)", "帮助(H)", "版本号(B)"].map((m) => <button type="button" key={m}>{m}</button>)}
        </Menu>
        <Band $w={150}><T i="newChange" t="新建变更" drop /><T i="mascot" t="广小二" /></Band>
        <Band $w={186} $pl={25}><T t="如何快速布置自定义范.." brown /></Band>
        <Band $grow><T i="user" t="13907298339" drop /><T t="造价豆:0" /><T i="bell" /><More /></Band>
      </Row>

      <Row $h={30}>
        <Band $w={150}>
          <T i="new" /><T i="open" drop /><T i="save" /><Sep /><T i="undo" drop /><More />
        </Band>
        <Band $w={547}>
          <T i="define" t="定义" /><T i="sigma" t="汇总计算" /><T i="cloud" t="云检查" /><T i="alignTop" t="平齐板顶" off />
          <T i="binoc" t="查找图元" /><T i="glasses" t="查看钢筋量" /><T i="batch" t="批量选择" off /><More />
        </Band>
        <Band $grow $pl={2}>
          <Combo label="视图" value="三维" w={60} icon="cube" />
          <T i="cubeTop" t="俯视" drop /><T i="orbit" t="动态观察" on /><T i="part3d" t="局部三维" off /><Sep />
          <T i="fit" t="全屏" /><T i="zoom" t="缩放" drop /><T i="pan" t="平移" drop /><T i="rotScreen" t="屏幕旋转" drop tight /><Sep />
          <T i="layers" t="选择楼层" /><More />
        </Band>
      </Row>

      <Body>
        <Side>
          <SideTitle>
            <SideName>模块导航栏</SideName>
            <MiniButton type="button" aria-label="固定"><Icon name="pin" size={12} /></MiniButton>
            <MiniButton type="button" aria-label="关闭"><Icon name="close" size={12} /></MiniButton>
          </SideTitle>
          <SideButton type="button">工程设置</SideButton>
          <SideButton type="button">绘图输入</SideButton>
          <SideTools>
            <button type="button" aria-label="展开"><Icon name="addNode" /></button>
            <button type="button" aria-label="折叠"><Icon name="delNode" /></button>
          </SideTools>
          <TreeBox>
            <TreeList>{TREE.map((item, i) => <TreeItem item={item} key={i} />)}</TreeList>
            <VScroll>
              <Chevron d="M0 6l4-4 4 4" w={9} />
              <VThumb />
              <Chevron d="M0 2l4 4 4-4" w={9} />
            </VScroll>
          </TreeBox>
          <SideButton type="button">单构件输入</SideButton>
          <SideButton type="button">报表预览</SideButton>
        </Side>

        <Main>
          <Row>
            <Band $pr={1}>
              <Grip />
              <T i="brush" t="删除" /><Sep /><T i="copy" t="复制" /><T i="mirror" t="镜像" /><Sep /><T i="move" t="移动" /><T i="rotate" t="旋转" /><Sep />
              <T i="extend" t="延伸" off /><T i="trim" t="修剪" off /><Sep /><T i="break" t="打断" off /><T i="merge" t="合并" /><T i="split" t="分割" /><Sep />
              <T i="align" t="对齐" off drop tight /><T i="offset" t="偏移" /><T i="stretch" t="拉伸" /><Sep /><T i="grip" t="设置夹点" />
            </Band>
          </Row>
          <Row>
            <Band $pr={1}>
              <Grip />
              <Combo label="楼层" value="基础层" w={57} /><Combo label="类别" value="基础" /><Combo label="构件类型" value="筏板基础" /><Combo label="构件" value="FB-2" />
              <Sep />
              <T i="props" t="属性" /><T i="editBar" t="编辑钢筋" on /><T i="list" t="构件列表" /><T i="picker" t="拾取构件" />
            </Band>
            <Band $ml={70}>
              <Grip />
              <T i="twoPt" t="两点" /><T i="parallel" t="平行" /><T i="angle" t="点角" drop /><T i="threePt" t="三点辅轴" drop />
              <T i="brush" t="删除辅轴" /><T i="dimension" t="尺寸标注" drop />
            </Band>
          </Row>
          <Row $h={29}>
            <Band $grow>
              <Grip />
              <T i="pointer" t="选择" drop /><Sep /><T i="point" t="点" /><Sep /><T i="line" t="直线" /><T i="arc" t="三点画弧" drop />
              <Combo label="画法" value="" w={55} />
              <T i="rect" t="矩形" /><Sep /><T i="autoGrid" t="自动生成板" /><T i="beamSplit" t="按梁分割" /><T i="section" t="设置筏板变截面" />
              <T i="viewBar" t="查看板内钢筋" /><T i="slope" t="设置所有边坡" drop /><T i="slopeCancel" t="取消所有边坡" drop /><T i="slant" t="三点定义斜筏板" drop />
              <More />
            </Band>
            <Band $w={33}><Grip /><Blank /></Band>
          </Row>

          <View><Scene /></View>

          <Row $h={30}>
            <Band $pr={1}><Grip /><T i="ortho" t="正交" /><T i="snap" t="对象捕捉" on /><T i="dyn" t="动态输入" /></Band>
            <Band><Grip /><T i="cross" t="交点" /><T i="perp" t="垂点" on /><T i="mid" t="中点" on /><T i="penta" t="顶点" /><T i="coord" t="坐标" /></Band>
            <Band $pr={3}>
              <Grip /><Combo label="偏移" value="不偏移" w={57} /><Sep />
              <Field>X=<Spin label="X" value="0" /></Field><Unit>mm</Unit>
              <Field $pl={2}>Y=<Spin label="Y" value="0" /></Field><Unit>mm</Unit><Sep />
              <CheckLabel><Check type="checkbox" />旋转</CheckLabel><Spin label="旋转角度" value="0.000" w={67} /><Unit>°</Unit>
            </Band>
          </Row>

          <Details>
            <DockGrip><DockClose type="button" aria-label="关闭面板"><Icon name="close" size={9} /></DockClose></DockGrip>
            <DetailsMain>
              <DetailsTools>
                <T i="first" off /><T i="prev" off /><T i="next" off /><T i="last" off /><Sep /><T i="up" off /><T i="down" off /><Sep />
                <T i="insert" t="插入" off /><T i="delRow" t="删除" off /><T i="scale" t="缩尺配筋" off /><T i="info" t="钢筋信息" off /><T i="lib" t="钢筋图库" off />
                <T i="other" t="其他" drop tight /><T t="关闭" /><Sep /><Note>单构件钢筋总重(kg)：0</Note>
              </DetailsTools>
              <GridBox>
                <GridClip>
                  <Table>
                    <colgroup>{COLS.map(([w], i) => <col key={i} style={{ width: w }} />)}</colgroup>
                    <thead><tr>{COLS.map(([, t], i) => <Th key={i} $on={i === 2}>{t}</Th>)}</tr></thead>
                    <tbody><tr>{COLS.map((c, i) => <Td key={i} $head={i === 0} $on={i === 2} $edge={i === 1}>{i === 0 ? "1*" : ""}</Td>)}</tr></tbody>
                  </Table>
                </GridClip>
                <HScroll>
                  <Chevron d="M6 0L2 4l4 4" /><HTrack><HThumb /></HTrack><Chevron d="M2 0l4 4-4 4" />
                </HScroll>
              </GridBox>
            </DetailsMain>
          </Details>
        </Main>
      </Body>

      <StatusBar>
        <StatusCell $w={148}>X=419431 Y=30495</StatusCell><StatusCell $w={77}>层高:2.15m</StatusCell>
        <StatusCell $w={97}>底标高:-2.2m</StatusCell><StatusCell $w={47}>0</StatusCell>
        <StatusCell $grow /><StatusCell $w={70}>182.8 FPS</StatusCell>
      </StatusBar>

      <TaskBar>
        <StartButton type="button" aria-label="开始"><Pic w={16}>{F("M0 2.500l7-1V7.500H0zM8 1.300L16 0v7.500H8zM0 8.500h7v6l-7-1zM8 8.500h8V16l-8-1.300z", "#fff")}</Pic></StartButton>
        <Search>
          <Pic w={23}><circle cx="12" cy="11.500" r="9" fill="none" stroke="#000" strokeWidth="2.600" /></Pic>
          <SearchInput aria-label="搜索" placeholder="在这里输入你要搜索的内容" />
          <Pic w={16} h={18}><rect x="5.500" y="1.500" width="5" height="11" rx="1" fill="none" stroke="#333" />{S("M2.500 9v4q0 2 2 2h7q2 0 2-2V9M8 15v2M5 17h6", "#333")}</Pic>
        </Search>
        <TaskButton type="button" $w={48} aria-label="任务视图"><Pic w={18}>{S("M1.500 1v3h10V1M1.500 17v-3h10v3M1.500 5.500h10v7h-10zM15.500 1v4M15.500 8v8", "#fff", 1.200)}<rect x="14" y="5" width="3" height="3" fill="#fff" /></Pic></TaskButton>
        <TaskButton type="button" $w={52} aria-label="助手"><Pic>{F("M11 1H5a4 4 0 0 0-4 4q0 5 8 6 2-3 2-10zM12 1h6a4 4 0 0 1 3 4q0 3-1 6-5-3-9 0 2-4 1-10zM22 12v6a4 4 0 0 1-4 4q-4 0-5-9 4 2 9-1zM1 12q4 3 10 0 2 5-1 10H5a4 4 0 0 1-4-4z", "#e8e8e8")}</Pic></TaskButton>
        <TaskButton type="button" $w={52} aria-label="浏览器"><Pic>{S("M7 12h13q0-6-7-6-6 0-7 7 0 7 7 7 4 0 6-3", "#e8e8e8", 3.200)}{S("M4 21Q-1 20 9 9 21-1 21 5", "#e8e8e8", 1.400)}</Pic></TaskButton>
        <TaskButton type="button" $w={52} aria-label="消息"><Pic w={28}>{S("M16 9Q11 5 6 9T4 19q3 5 9 4M17 15q-1-4-5-4-5 1-5 5 1 4 5 4 4-1 4-4-2-3-4-1-1 2 1 2", "#ddd", 1.200)}{S("M13 23q7-1 6-8", "#ddd", 1.200)}{F("M21 1q5 1 5 8l2 3H15l2-3q0-7 4-8zM20 12h3v2h-3z", "#d89a10")}</Pic></TaskButton>
        <TaskButton type="button" aria-label="Edge"><Pic>{F("M2 11Q4 2 12 2q9 0 10 10v2H9q1 4 6 4 3 0 6-2v4q-3 2-7 2-9-1-9-9 0-4 4-6-4 1-7 4zM9 10h8q0-4-4-4-3 0-4 4z", "#0a78d7")}</Pic></TaskButton>
        <TaskButton type="button" aria-label="Internet Explorer"><Pic>{S("M6 12h14q0-6-7-6-6 0-7 7 0 7 7 7 4 0 6-3", "#38a3ec", 4)}{S("M4 22Q-2 21 8 9 21-2 22 3q0 2-1 4", "#f3c52c", 1.800)}</Pic></TaskButton>
        <TaskButton type="button" aria-label="文件资源管理器"><Pic>{F("M1 3h9l1 2h12v16H1z", "#fde28c")}{F("M1 3h9v3H1z", "#f0b838")}{F("M5 13h14v8h-4v-4H9v4H5z", "#39a5dc")}</Pic></TaskButton>
        <TaskButton type="button" $run aria-label="安全浏览器"><Pic><circle cx="12" cy="12" r="11" fill="#fff" /><circle cx="12" cy="12" r="9.500" fill="#4fb81c" />{S("M8 12h9q0-4-5-4-4 0-5 5 0 4 5 4 3 0 4-2", "#fff", 2.500)}{S("M1 20Q5 10 22 2", "#2f8c10", 1.200)}</Pic></TaskButton>
        <TaskButton type="button" aria-label="邮件"><Pic>{F("M0 8l12-6 12 6v13H0z", "#fff")}{F("M2 8h20l-8 5 4 3-7-2z", "#04161a")}</Pic></TaskButton>
        <TaskButton type="button" $run aria-label="广联达"><Icon name="logo" size={24} /></TaskButton>
        <TaskButton type="button" $w={50}>链接</TaskButton>
        <Tray>
          <TaskButton type="button" $w={38} aria-label="人脉"><Pic w={16}>{S("M5.500 6.500a2.500 2.500 0 1 0 .1 0M1 16q0-5 4.500-5T10 16M11 1.500a2.500 2.500 0 1 0 .1 0M9 9q5-5 6.500 3", "#fff", 1.200)}</Pic></TaskButton>
          <TrayText $w={76}><span>53%</span><span>CPU使用</span></TrayText>
          <TaskButton type="button" $w={24} aria-label="显示隐藏的图标"><Pic w={14}>{S("M1 10l6-6 6 6", "#fff", 1.400)}</Pic></TaskButton>
          <TaskButton type="button" $w={24} aria-label="通知"><Pic w={14}>{F("M7 0q4 1 4 6v3l2 2H1l2-2V6q0-5 4-6zM5 12h4v1H5z", "#fff")}</Pic></TaskButton>
          <TaskButton type="button" $w={24} aria-label="电源"><Pic w={18} h={14}>{S("M6 3.500h9.500v8h-10M16.500 6v3M2.500 1v3M5.500 1v3M1 4.500h6v1q-1 2-3 2v3h2", "#fff")}{F("M8 5h6v5H8z", "#fff")}</Pic></TaskButton>
          <TaskButton type="button" $w={24} aria-label="网络"><Pic w={16}>{S("M3 14Q4 5 14 3M6 14q1-6 8-8M9 14q1-4 5-5", "#fff", 1.100)}{F("M11 14q0-2 3-3v3z", "#fff")}{S("M1 13Q2 3 13 1", "#777")}</Pic></TaskButton>
          <TaskButton type="button" $w={24} aria-label="音量"><Pic w={17} h={14}>{S("M1.500 5h3l3-3v10l-3-3h-3zM9.500 5q1 2 0 4M11.500 3q3 4 0 8", "#fff")}{S("M14 2q3 5 0 10", "#777")}</Pic></TaskButton>
          <TaskButton type="button" $w={30} aria-label="键盘"><Pic w={24} h={14}>{S("M.500.500h22v12H.500z", "#fff")}<path d="M3 4h18M3 7h18M5 10h14" stroke="#fff" strokeDasharray="1.500 1.500" /></Pic></TaskButton>
          <TaskButton type="button" $w={30}>中</TaskButton>
          <TaskButton type="button" $w={30} aria-label="输入法"><Pic w={16}>{F("M0 2l14-2 2 14-13 2z", "#f04a14")}{S("M12 4Q5 2 5 6q1 2 4 2 3 1 2 3-2 2-7 1", "#fff", 2.200)}</Pic></TaskButton>
          <TrayText $w={72}><span>13:40</span><span>2018/9/20</span></TrayText>
          <TaskButton type="button" $w={49} aria-label="操作中心"><Pic w={26}>{F("M1 2h17v12h-6l-4 4v-4H1z", "#fff")}{S("M4 5.500h11M4 8.500h11", "#222")}<circle cx="17" cy="17" r="7.500" fill="#333" stroke="#888" /><text x="17" y="22" fontSize="13" fontWeight="700" textAnchor="middle" fill="#fff">2</text></Pic></TaskButton>
          <Edge />
        </Tray>
      </TaskBar>
    </Shell>
  );
}
